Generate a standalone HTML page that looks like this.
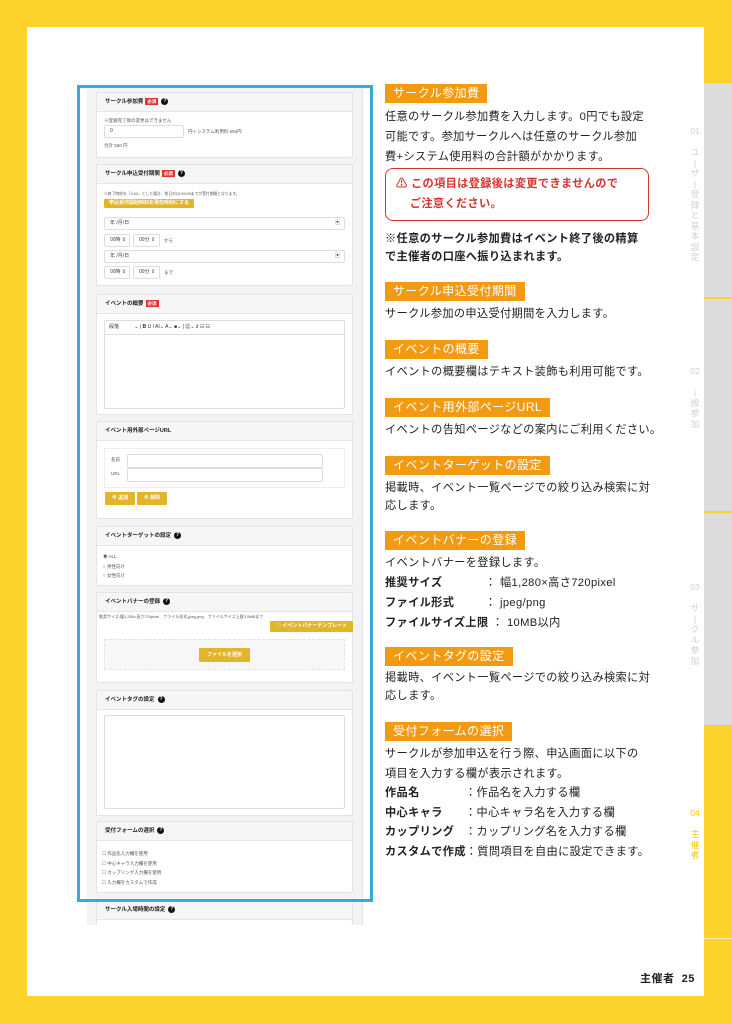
<!DOCTYPE html>
<html><head><meta charset="utf-8"><style>
*{margin:0;padding:0;box-sizing:border-box}
body{width:732px;height:1024px;position:relative;background:#FDD22A;font-family:"Liberation Sans","Noto Sans CJK JP",sans-serif;overflow:hidden;color:#222}
.a{position:absolute}
.white{left:27px;top:27px;width:677px;height:969px;background:#fff}
.tab{left:704px;width:28px;background:#DCDCDC}
.tl{position:absolute;width:22px;text-align:center;font-size:8.5px;color:#d0d0d0;line-height:10.5px}
.lab{position:absolute;left:385px;height:19px;background:#F29A12;color:#fff;font-size:12px;line-height:19px;padding:0 8px;letter-spacing:.4px;white-space:nowrap}
.tx{position:absolute;left:385px;font-size:11.2px;letter-spacing:.35px;line-height:20px;color:#222;white-space:nowrap}
.b{font-weight:bold}
.panel{left:87px;top:85px;width:276px;height:840px;background:#f2f3f5;border-right:1px solid #e2e2e2}
.card{position:absolute;left:96px;width:257px;background:#fff;border:1px solid #e3e4e6;border-radius:2px}
.hd{height:19px;background:#f5f6f8;border-bottom:1px solid #e6e6e6;font-size:5.5px;font-weight:bold;line-height:18px;padding-left:8px;white-space:nowrap}
.req{display:inline-block;background:#d33;color:#fff;font-size:4.5px;padding:0 2px;line-height:7px;margin-left:2px;vertical-align:middle}
.q{display:inline-block;width:7px;height:7px;border-radius:50%;background:#111;color:#fff;font-size:5px;line-height:7px;text-align:center;margin-left:3px;vertical-align:middle}
.s{font-size:4.5px;color:#555;position:absolute;white-space:nowrap}
.in{position:absolute;border:1px solid #ddd;border-radius:2px;background:#fff;font-size:5px;line-height:11px;padding-left:5px;color:#444}
.btn{position:absolute;background:#E2B52A;color:#fff;font-size:5px;font-weight:bold;text-align:center;border-radius:1px}
</style></head><body>
<div class="a white"></div>
<div class="a tab" style="top:83px;height:214px"></div>
<div class="a tab" style="top:299px;height:212px"></div>
<div class="a tab" style="top:513px;height:212px"></div>
<div class="a" style="left:704px;top:938px;width:28px;height:1px;background:#fff3b0"></div>
<div class="tl" style="left:684px;top:126px">01<br><br>ユ<br>|<br>ザ<br>|<br>登<br>録<br>と<br>基<br>本<br>設<br>定</div>
<div class="tl" style="left:684px;top:366px">02<br><br>|<br>般<br>参<br>加</div>
<div class="tl" style="left:684px;top:582px">03<br><br>サ<br>|<br>ク<br>ル<br>参<br>加</div>
<div class="tl" style="left:684px;top:808px;color:#F5C400">04<br><br>主<br>催<br>者</div>
<div class="a" style="left:640px;top:970px;font-size:11px;font-weight:bold;letter-spacing:.5px">主催者&nbsp; 25</div>

<div class="lab" style="top:84px">サークル参加費</div>
<div class="tx" style="top:107px">任意のサークル参加費を入力します。0円でも設定<br>可能です。参加サークルへは任意のサークル参加<br>費+システム使用料の合計額がかかります。</div>
<div class="a" style="left:385px;top:168px;width:264px;height:53px;border:1.5px solid #D6332E;border-radius:8px"></div>
<div class="tx b" style="left:396px;top:174px;color:#D6332E">⚠ この項目は登録後は変更できませんので<br>&nbsp;&nbsp;&nbsp;&nbsp;ご注意ください。</div>
<div class="tx b" style="top:230px;line-height:18px">※任意のサークル参加費はイベント終了後の精算<br>で主催者の口座へ振り込まれます。</div>
<div class="lab" style="top:282px">サークル申込受付期間</div>
<div class="tx" style="top:304px">サークル参加の申込受付期間を入力します。</div>
<div class="lab" style="top:340px">イベントの概要</div>
<div class="tx" style="top:362px">イベントの概要欄はテキスト装飾も利用可能です。</div>
<div class="lab" style="top:398px">イベント用外部ページURL</div>
<div class="tx" style="top:420px">イベントの告知ページなどの案内にご利用ください。</div>
<div class="lab" style="top:456px">イベントターゲットの設定</div>
<div class="tx" style="top:479px;line-height:18px">掲載時、イベント一覧ページでの絞り込み検索に対<br>応します。</div>
<div class="lab" style="top:531px">イベントバナーの登録</div>
<div class="tx" style="top:553px">イベントバナーを登録します。<br><b>推奨サイズ</b><span style="position:absolute;left:100px">： 幅1,280×高さ720pixel</span><br><b>ファイル形式</b><span style="position:absolute;left:100px">： jpeg/png</span><br><b>ファイルサイズ上限</b> ： 10MB以内</div>
<div class="lab" style="top:647px">イベントタグの設定</div>
<div class="tx" style="top:669px;line-height:18px">掲載時、イベント一覧ページでの絞り込み検索に対<br>応します。</div>
<div class="lab" style="top:722px">受付フォームの選択</div>
<div class="tx" style="top:745px;line-height:19.5px">サークルが参加申込を行う際、申込画面に以下の<br>項目を入力する欄が表示されます。<br><b>作品名</b><span style="position:absolute;left:80px">：作品名を入力する欄</span><br><b>中心キャラ</b><span style="position:absolute;left:80px">：中心キャラ名を入力する欄</span><br><b>カップリング</b><span style="position:absolute;left:80px">：カップリング名を入力する欄</span><br><b>カスタムで作成</b>：質問項目を自由に設定できます。</div>

<div class="a panel"></div>
<div class="card" style="top:92px;height:66px"><div class="hd">サークル参加費<span class="req">必須</span><span class="q">?</span></div>
<div class="s" style="left:7px;top:25px">※登録完了後の変更はできません</div>
<div class="in" style="left:7px;top:32px;width:80px;height:13px">0</div>
<div class="s" style="left:91px;top:36px">円＋システム利用料 550円</div>
<div class="s" style="left:7px;top:50px">合計 550 円</div></div>
<div class="card" style="top:164px;height:122px"><div class="hd">サークル申込受付期間<span class="req">必須</span><span class="q">?</span></div>
<div class="s" style="left:7px;top:27px;font-size:3.8px">※終了時刻を「0:00」とした場合、前日の23:59:59までが受付期間となります。</div>
<div class="btn" style="left:7px;top:34px;width:90px;height:9px;line-height:9px">申込受付開始時刻を現在時刻にする</div>
<div class="in" style="left:7px;top:52px;width:241px;height:13px">年 /月/日<span style="position:absolute;right:4px">▣</span></div>
<div class="in" style="left:7px;top:69px;width:26px;height:13px">00時 ⇕</div>
<div class="in" style="left:36px;top:69px;width:27px;height:13px">00分 ⇕</div>
<div class="s" style="left:67px;top:73px">から</div>
<div class="in" style="left:7px;top:85px;width:241px;height:13px">年 /月/日<span style="position:absolute;right:4px">▣</span></div>
<div class="in" style="left:7px;top:101px;width:26px;height:13px">00時 ⇕</div>
<div class="in" style="left:36px;top:101px;width:27px;height:13px">00分 ⇕</div>
<div class="s" style="left:67px;top:105px">まで</div></div>
<div class="card" style="top:294px;height:121px"><div class="hd">イベントの概要<span class="req">必須</span></div>
<div class="in" style="left:7px;top:25px;width:241px;height:89px;padding:0"><div style="height:14px;border-bottom:1px solid #ddd;font-size:5px;line-height:13px;padding-left:4px;color:#333">段落&nbsp;&nbsp;&nbsp;&nbsp;&nbsp;&nbsp;&nbsp;&nbsp;&nbsp;&nbsp;&nbsp;⌄ | <b>B</b> U <i>I</i> AI⌄ A⌄ ■⌄ | ▦⌄ ∂ ☷ ☷</div></div></div>
<div class="card" style="top:421px;height:98px"><div class="hd">イベント用外部ページURL</div>
<div class="a" style="left:7px;top:26px;width:241px;height:40px;border:1px solid #eee"></div>
<div class="s" style="left:14px;top:35px">名前</div><div class="in" style="left:30px;top:32px;width:196px;height:14px"></div>
<div class="s" style="left:14px;top:49px">URL</div><div class="in" style="left:30px;top:46px;width:196px;height:14px"></div>
<div class="btn" style="left:8px;top:70px;width:30px;height:13px;line-height:13px">⊕ 追加</div>
<div class="btn" style="left:40px;top:70px;width:30px;height:13px;line-height:13px">⊕ 削除</div></div>
<div class="card" style="top:526px;height:60px"><div class="hd">イベントターゲットの設定<span class="q">?</span></div>
<div class="s" style="left:6px;top:25px;line-height:9.5px">◉ ALL<br>○ 男性向け<br>○ 女性向け</div></div>
<div class="card" style="top:592px;height:91px"><div class="hd">イベントバナーの登録<span class="q">?</span></div>
<div class="s" style="left:2px;top:21px;font-size:4px">推奨サイズ:幅1,280×高さ720pixel　ファイル形式:jpeg,png　ファイルサイズ上限:10MBまで</div>
<div class="btn" style="left:173px;top:28px;width:83px;height:11px;line-height:11px">☁ イベントバナーテンプレート</div>
<div class="a" style="left:7px;top:46px;width:241px;height:31px;background:#f7f7f7;border:1px dashed #e3e3e3"></div>
<div class="btn" style="left:102px;top:55px;width:51px;height:14px;line-height:14px">ファイルを選択</div></div>
<div class="card" style="top:690px;height:126px"><div class="hd">イベントタグの設定<span class="q">?</span></div>
<div class="in" style="left:7px;top:24px;width:241px;height:94px"></div></div>
<div class="card" style="top:821px;height:72px"><div class="hd">受付フォームの選択<span class="q">?</span></div>
<div class="s" style="left:5px;top:27px;line-height:9.5px">☐ 作品名入力欄を使用<br>☐ 中心キャラ入力欄を使用<br>☐ カップリング入力欄を使用<br>☐ 入力欄をカスタムで作成</div></div>
<div class="card" style="top:900px;height:25px;border-bottom:none"><div class="hd">サークル入場時間の設定<span class="q">?</span></div></div>
<div class="a" style="left:77px;top:85px;width:296px;height:817px;border:3px solid #3AA8DC"></div>
</body></html>
